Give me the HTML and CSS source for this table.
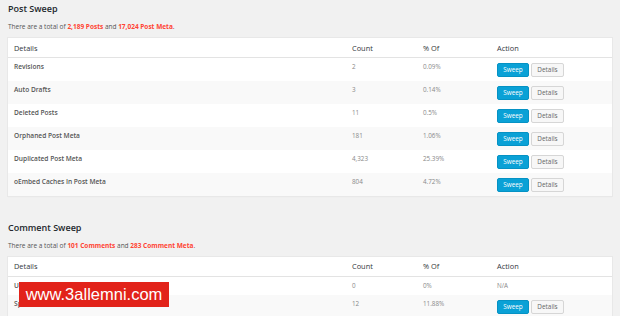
FILE: index.html
```html
<!DOCTYPE html>
<html>
<head>
<meta charset="utf-8">
<link rel="stylesheet" href="styles.css">
</head>
<body>
<div class="page">
  <section class="block">
    <h2 class="title">Post Sweep</h2>
    <p class="summary">There are a total of <strong>2,189 Posts</strong> and <strong>17,024 Post Meta</strong>.</p>
    <table class="grid">
      <colgroup><col class="c1"><col class="c2"><col class="c3"><col class="c4"></colgroup>
      <thead><tr><th>Details</th><th>Count</th><th>% Of</th><th>Action</th></tr></thead>
      <tbody>
        <tr><td class="label">Revisions</td><td>2</td><td>0.09%</td><td class="act"><span class="btn btn-sweep">Sweep</span><span class="btn btn-det">Details</span></td></tr>
        <tr class="alt"><td class="label">Auto Drafts</td><td>3</td><td>0.14%</td><td class="act"><span class="btn btn-sweep">Sweep</span><span class="btn btn-det">Details</span></td></tr>
        <tr><td class="label">Deleted Posts</td><td>11</td><td>0.5%</td><td class="act"><span class="btn btn-sweep">Sweep</span><span class="btn btn-det">Details</span></td></tr>
        <tr class="alt"><td class="label">Orphaned Post Meta</td><td>181</td><td>1.06%</td><td class="act"><span class="btn btn-sweep">Sweep</span><span class="btn btn-det">Details</span></td></tr>
        <tr><td class="label">Duplicated Post Meta</td><td>4,323</td><td>25.39%</td><td class="act"><span class="btn btn-sweep">Sweep</span><span class="btn btn-det">Details</span></td></tr>
        <tr class="alt"><td class="label">oEmbed Caches In Post Meta</td><td>804</td><td>4.72%</td><td class="act"><span class="btn btn-sweep">Sweep</span><span class="btn btn-det">Details</span></td></tr>
      </tbody>
    </table>
  </section>
  <section class="block second">
    <h2 class="title">Comment Sweep</h2>
    <p class="summary">There are a total of <strong>101 Comments</strong> and <strong>283 Comment Meta</strong>.</p>
    <table class="grid">
      <colgroup><col class="c1"><col class="c2"><col class="c3"><col class="c4"></colgroup>
      <thead><tr><th>Details</th><th>Count</th><th>% Of</th><th>Action</th></tr></thead>
      <tbody>
        <tr class="short"><td class="label">Unapproved Comments</td><td>0</td><td>0%</td><td>N/A</td></tr>
        <tr class="alt"><td class="label">Spammed Comments</td><td>12</td><td>11.88%</td><td class="act"><span class="btn btn-sweep">Sweep</span><span class="btn btn-det">Details</span></td></tr>
      </tbody>
    </table>
  </section>
</div>
<div class="watermark">www.3allemni.com</div>
</body>
</html>
```
FILE: styles.css
```css
html, body {
  margin: 0;
  padding: 0;
  background: #f1f1f1;
  overflow: hidden;
}
body {
  font-family: "Open Sans", "Noto Sans", sans-serif;
  color: #444;
  width: 620px;
  height: 316px;
  position: relative;
}
.page {
  padding: 2px 8px 0 8px;
}
.title {
  margin: 0;
  font-size: 9px;
  line-height: 14px;
  font-weight: 600;
  color: #23282d;
}
.summary {
  margin: 6px 0 0 0;
  font-size: 6.5px;
  line-height: 9px;
  color: #555;
}
.summary strong {
  color: #f43;
  font-weight: 700;
}
.grid {
  margin-top: 7px;
  width: 604px;
  border-collapse: collapse;
  table-layout: fixed;
  background: #fff;
  box-shadow: 0 1px 1px rgba(0,0,0,0.06);
  outline: 1px solid #e8e8e8;
}
.c1 { width: 338px; }
.c2 { width: 71px; }
.c3 { width: 74px; }
.c4 { width: 121px; }
.grid th {
  text-align: left;
  font-weight: 400;
  font-size: 7.4px;
  color: #32373c;
  height: 19px;
  padding: 0 6px;
  border-bottom: 1px solid #e3e3e3;
  line-height: 10px;
}
.grid td {
  font-size: 6.3px;
  line-height: 8px;
  color: #888;
  padding: 5px 6px 0 6px;
  height: 23px;
  vertical-align: top;
  box-sizing: border-box;
}
.grid td.label {
  font-weight: 600;
  color: #555;
  font-size: 6.6px;
}
.grid tr.alt td {
  background: #f9f9f9;
}
.grid tr.short td {
  height: 19px;
}
.grid td.act {
  padding-top: 5px;
}
.btn {
  display: inline-block;
  box-sizing: border-box;
  height: 14px;
  line-height: 12px;
  font-size: 6.4px;
  text-align: center;
  border-radius: 2px;
  vertical-align: top;
}
.btn-sweep {
  width: 32px;
  background: #0aa1d6;
  border: 1px solid #0592c4;
  color: #fff;
}
.btn-det {
  width: 33px;
  margin-left: 2px;
  background: #f7f7f7;
  border: 1px solid #d6d6d6;
  color: #666;
}
.second {
  margin-top: 25px;
}
.watermark {
  position: absolute;
  left: 19px;
  top: 282px;
  width: 150px;
  height: 25px;
  background: #e2231a;
  color: #fff;
  font-family: "Liberation Sans", Arial, sans-serif;
  font-size: 16.5px;
  line-height: 25px;
  text-align: center;
}
```
